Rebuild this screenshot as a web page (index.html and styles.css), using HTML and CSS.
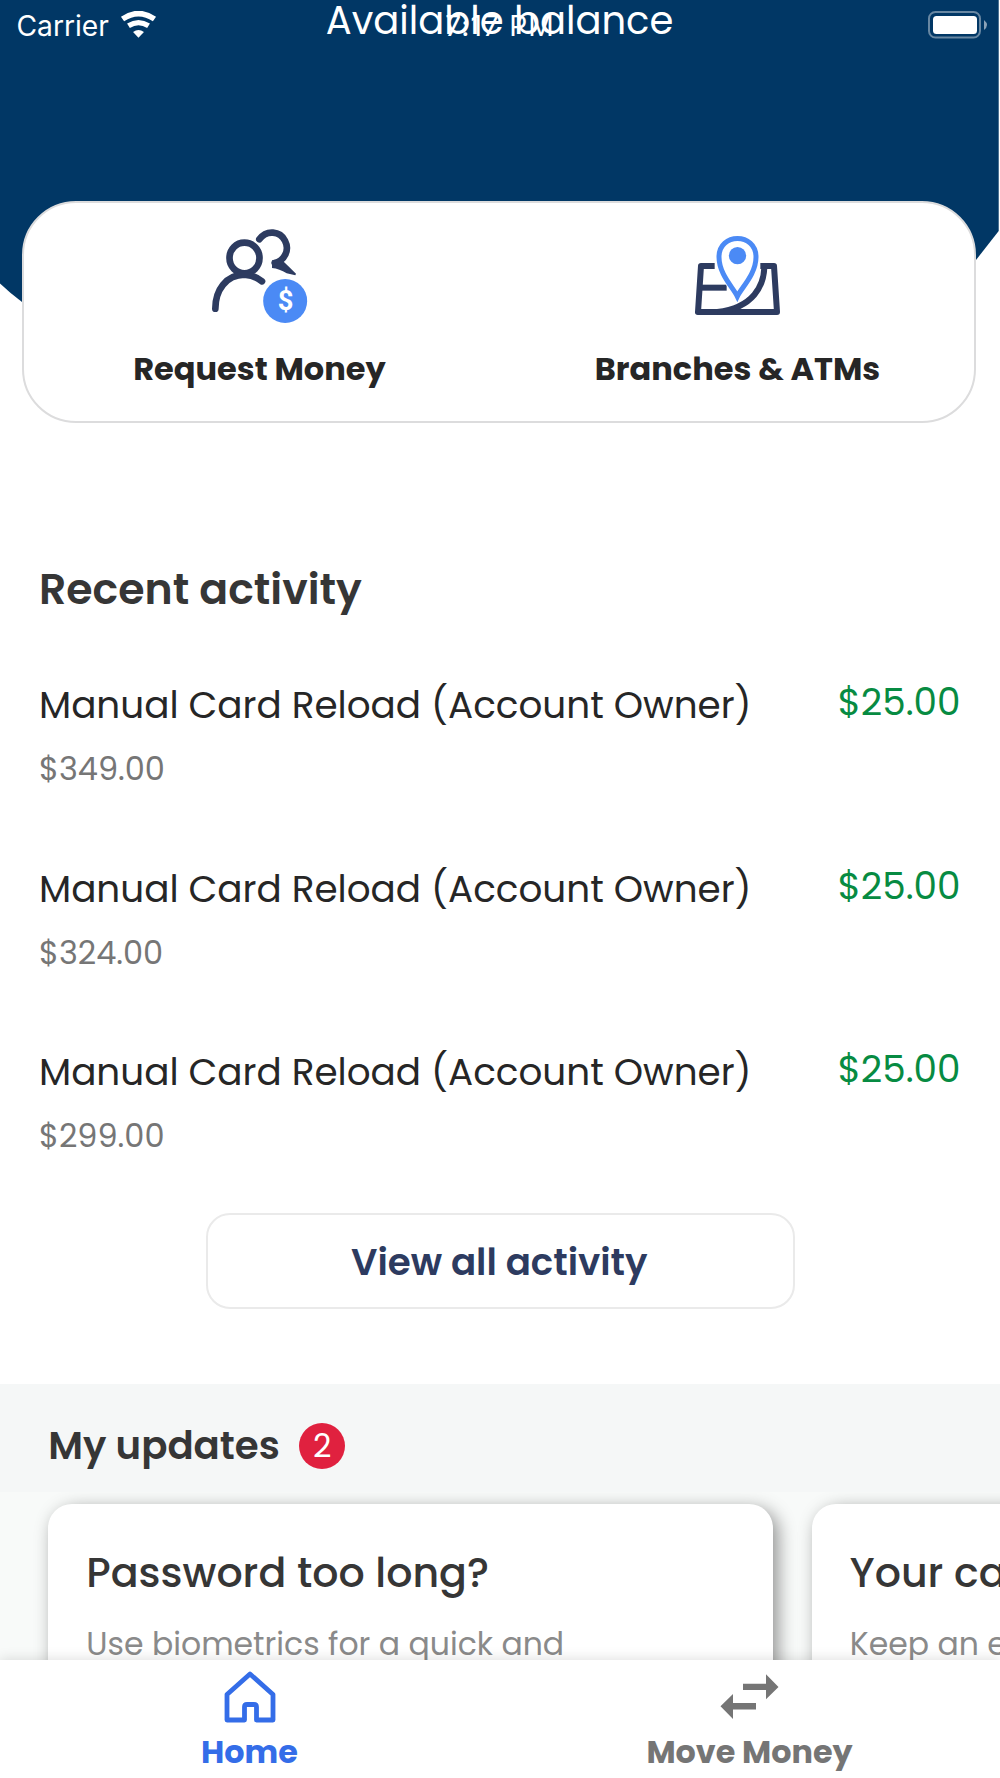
FILE: index.html
```html
<!DOCTYPE html>
<html lang="en">
<head>
<meta charset="utf-8">
<title>Home</title>
<link rel="stylesheet" href="styles.css">
</head>
<body>
<div class="app">
  <main class="content">
    <section class="hero">
      <svg class="hero-shape" viewBox="0 0 1000 400" aria-hidden="true">
        <path fill="#013765" d="M0 0H998.7V231L976 260Q760 400 500 400Q200 400 22 302Q10 293 0 283.5Z"/>
      </svg>
      <h1 class="balance-title">Available balance</h1>
      <div class="status-bar">
        <div class="status-left">
          <span class="carrier">Carrier</span>
          <svg class="wifi" viewBox="0 0 111 82" aria-hidden="true">
            <g fill="none" stroke="#fff">
              <path stroke-width="17" d="M7 24.500Q55.500 -9 104 24.500"/>
              <path stroke-width="16" d="M25 45Q55.500 26 86 45"/>
            </g>
            <path fill="#fff" d="M39 64Q55.500 52 72 64L55.500 81Z"/>
          </svg>
        </div>
        <span class="clock">7:17 PM</span>
        <svg class="battery" viewBox="0 0 60 28" aria-hidden="true">
          <rect x="1" y="1" width="51" height="25.500" rx="6.500" fill="none" stroke="#6887a2" stroke-width="2"/>
          <rect x="5" y="5" width="44" height="18" rx="3.500" fill="#fff"/>
          <path d="M56 9Q62 14 56 19Z" fill="#8ba2b7"/>
        </svg>
      </div>
      <div class="quick-actions">
        <div class="quick-action">
          <svg class="quick-icon" viewBox="0 0 420 360" aria-hidden="true">
            <g fill="none" stroke="#2d3b60" stroke-width="20" stroke-linecap="round">
              <ellipse cx="163.500" cy="129" rx="45" ry="46"/>
              <path d="M76 281C76 225 108 180 163 179Q193 180 216 199"/>
              <path d="M208 73C230 43 270 48 285 77C300 106 283 137 254 144"/>
            </g>
            <path fill="#2d3b60" d="M246 136L278 137Q296 154 318 176L316 181L290 175Q268 161 246 159Z"/>
            <circle cx="285.500" cy="258" r="66" fill="#4b8af5"/>
            <text x="287" y="286" class="dollar">$</text>
          </svg>
          <span class="quick-label">Request Money</span>
        </div>
        <div class="quick-action">
          <svg class="quick-icon" viewBox="-6 0 420 360" aria-hidden="true">
            <g fill="none" stroke="#2d3b60" stroke-width="18" stroke-linejoin="round">
              <path d="M134 153H93L84 291H321L312 153H271"/>
              <path d="M92 218H170"/>
            </g>
            <path fill="#fff" stroke="#fff" stroke-width="10" d="M202 252C190 228 139 172 139 126C139 41 265 41 265 126C265 172 214 228 202 252Z"/>
            <path fill="none" stroke="#2d3b60" stroke-width="18" d="M283 158C281 210 252 278 142 291"/>
            <path fill="#fff" stroke="#4b8af5" stroke-width="15" d="M202 244C190 218 147 178 147 126C147 52 258 52 258 126C258 178 214 218 202 244Z"/>
            <circle cx="202.500" cy="122" r="26" fill="#4b8af5"/>
          </svg>
          <span class="quick-label">Branches &amp; ATMs</span>
        </div>
      </div>
    </section>

    <section class="activity">
      <h2 class="section-title">Recent activity</h2>
      <ul class="transactions">
        <li class="transaction">
          <div><p class="tx-name">Manual Card Reload (Account Owner)</p><p class="tx-balance">$349.00</p></div>
          <span class="tx-amount">$25.00</span>
        </li>
        <li class="transaction">
          <div><p class="tx-name">Manual Card Reload (Account Owner)</p><p class="tx-balance">$324.00</p></div>
          <span class="tx-amount">$25.00</span>
        </li>
        <li class="transaction">
          <div><p class="tx-name">Manual Card Reload (Account Owner)</p><p class="tx-balance">$299.00</p></div>
          <span class="tx-amount">$25.00</span>
        </li>
      </ul>
      <button class="view-all" type="button">View all activity</button>
    </section>

    <section class="updates">
      <header class="updates-header">
        <h2 class="updates-title">My updates</h2>
        <span class="count">2</span>
      </header>
      <div class="cards">
        <article class="card">
          <h3 class="card-title">Password too long?</h3>
          <p class="card-text">Use biometrics for a quick and</p>
        </article>
        <article class="card">
          <h3 class="card-title">Your ca</h3>
          <p class="card-text">Keep an e</p>
        </article>
      </div>
    </section>
  </main>

  <nav class="tabs">
    <a class="tab tab-active">
      <svg class="tab-icon" viewBox="0 0 60 52" aria-hidden="true">
        <path fill="none" stroke="#346de8" stroke-width="4.800" stroke-linejoin="round" d="M30 3L53 23.500V49H36.500V36Q36.500 33.500 34 33.500H27Q24.500 33.500 24.500 36V49H7V23.500Z"/>
      </svg>
      <span class="tab-label">Home</span>
    </a>
    <a class="tab">
      <svg class="tab-icon" viewBox="0 0 60 52" aria-hidden="true">
        <path fill="#757575" d="M23 12.700H46V3.300L58.500 16L46 28.300V19H23ZM36 32V38.500H13V48L.5 35.300L13 23V32Z"/>
      </svg>
      <span class="tab-label">Move Money</span>
    </a>
  </nav>
</div>
</body>
</html>
```
FILE: styles.css
```css
* { box-sizing: border-box; }

body {
  margin: 0;
  background: #fff;
  font-family: Poppins, Inter, "Open Sans", sans-serif;
  white-space: nowrap;
}

h1, h2, h3, p, ul { margin: 0; padding: 0; }

.app {
  display: flex;
  flex-direction: column;
  width: 1000px;
  height: 1778px;
  overflow: hidden;
}

.content { flex: 1; min-height: 0; overflow: hidden; }

/* Hero */
.hero { position: relative; height: 423px; }

.hero-shape {
  position: absolute;
  inset: 0;
  width: 1000px;
  height: 400px;
}

.balance-title {
  position: relative;
  height: 201px;
  padding-right: 1px;
  text-align: center;
  color: #fff;
  font-size: 38.500px;
  font-weight: 400;
  line-height: 42px;
}

.status-bar {
  position: absolute;
  top: 5px;
  left: 0;
  right: 0;
  height: 42px;
  padding: 0 12.500px 0 16.500px;
  display: grid;
  grid-template-columns: 1fr auto 1fr;
  align-items: center;
  color: #fff;
  font-family: Inter, sans-serif;
  font-size: 28.200px;
}

.status-left { display: flex; align-items: center; gap: 11px; }
.wifi { width: 37px; height: 27px; margin-top: -4px; }
.clock { margin-right: 4px; letter-spacing: 1.100px; }
.battery { width: 60px; height: 28px; justify-self: end; margin-top: -3px; }

.quick-actions {
  position: relative;
  display: grid;
  grid-template-columns: 478px 478px;
  justify-content: center;
  height: 222px;
  margin: 0 24px 0 22px;
  padding: 12px 1px 0 0;
  background: #fff;
  border: 2.500px solid #dcdcdd;
  border-radius: 54px;
}

.quick-action { display: flex; flex-direction: column; align-items: center; }
.quick-icon { width: 140px; height: 120px; }

.dollar {
  fill: #fff;
  font-family: Roboto, sans-serif;
  font-size: 82px;
  font-weight: 700;
  text-anchor: middle;
}

.quick-label {
  margin-top: 14px;
  color: #262626;
  font-size: 32px;
  font-weight: 700;
  line-height: 40px;
}

/* Recent activity */
.activity {
  display: flex;
  flex-direction: column;
  height: 961px;
  padding: 141px 39.500px 0 39px;
}

.section-title {
  color: #363636;
  font-size: 42.600px;
  font-weight: 600;
  line-height: 50px;
}

.transactions {
  display: flex;
  flex-direction: column;
  gap: 73.500px;
  margin-top: 66px;
  list-style: none;
}

.transaction { display: flex; justify-content: space-between; height: 110px; }

.tx-name {
  color: #262626;
  font-size: 37.330px;
  line-height: 50px;
}

.tx-balance {
  margin-top: 17px;
  color: #767676;
  font-size: 32px;
  line-height: 44px;
}

.tx-amount {
  color: #078b42;
  font-size: 37.330px;
  line-height: 44px;
}

.view-all {
  align-self: center;
  width: 589px;
  height: 96px;
  margin: 56px 0 0 2px;
  padding: 2px 3px 0 0;
  background: #fff;
  border: 2.500px solid #eaeaea;
  border-radius: 24px;
  color: #2d3b60;
  font: inherit;
  font-size: 37.200px;
  font-weight: 600;
}

/* Updates */
.updates { background: #f8faf9; }

.updates-header {
  display: flex;
  align-items: center;
  gap: 19.500px;
  height: 108px;
  padding: 15px 0 0 48.200px;
  background: #f5f7f7;
}

.updates-title {
  color: #363636;
  font-size: 38.700px;
  font-weight: 600;
}

.count {
  width: 46px;
  height: 46px;
  border-radius: 50%;
  background: #e0213f;
  color: #fff;
  font-size: 32px;
  line-height: 46px;
  text-align: center;
}

.cards {
  display: flex;
  gap: 38.500px;
  width: 1600px;
  height: 200px;
  padding: 12px 0 0 48.300px;
  clip-path: inset(0);
}

.card {
  width: 725px;
  height: 320px;
  padding: 44px 38px;
  background: #fff;
  border-radius: 24px;
  box-shadow: 5px 5px 18px rgba(0, 0, 0, 0.42);
}

.card-title {
  color: #363636;
  font-size: 41.100px;
  font-weight: 500;
  line-height: 50px;
}

.card-text {
  margin-top: 26px;
  color: #8a8a8a;
  font-size: 31.500px;
  line-height: 40px;
}

/* Bottom tabs */
.tabs {
  position: relative;
  display: grid;
  grid-template-columns: 1fr 1fr;
  height: 118px;
  background: #fff;
  box-shadow: 0 -1px 12px rgba(0, 0, 0, 0.13);
}

.tab {
  display: flex;
  flex-direction: column;
  align-items: center;
  padding-top: 11px;
  color: #757575;
}
.tab-active { color: #346de8; }
.tab-icon { width: 60px; height: 52px; }

.tab-label {
  margin: 9px 1px 0 0;
  font-size: 31.800px;
  font-weight: 700;
  line-height: 41px;
}
```
